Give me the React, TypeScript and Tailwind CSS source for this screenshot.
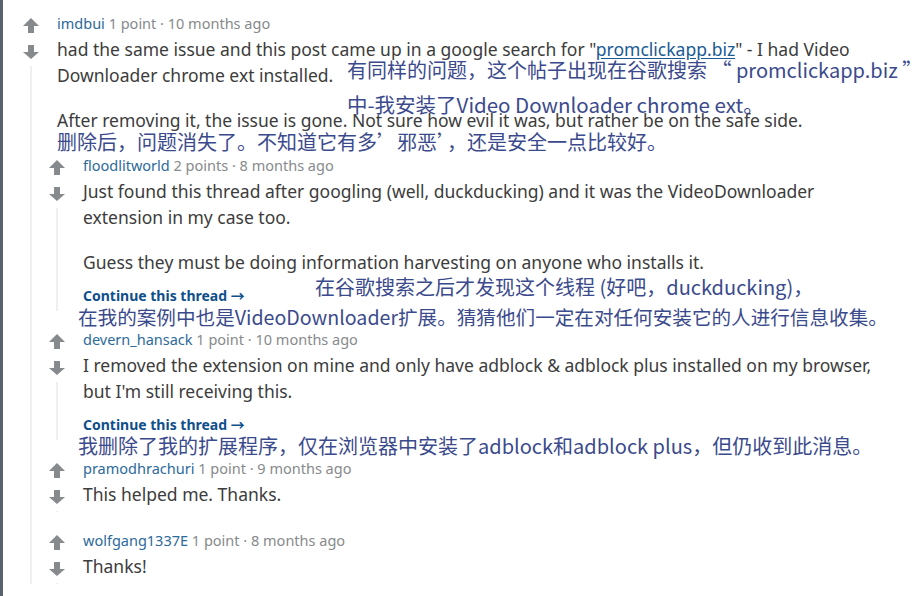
import React from "react";

type CommentData = {
  user: string;
  score: string;
  age: string;
  body: React.ReactNode[];
  more?: boolean;
  replies?: CommentData[];
};

const UpArrow = () => (
  <svg width="16" height="15" viewBox="0 0 16 15" className="block">
    <path d="M8 0 L16 8 H11 V15 H5 V8 H0 Z" fill="#878a8c" />
  </svg>
);

const DownArrow = () => (
  <svg width="16" height="14" viewBox="0 0 16 14" className="block mt-3">
    <path d="M5 0 H11 V7 H16 L8 14 L0 7 H5 Z" fill="#878a8c" />
  </svg>
);

const comments: CommentData[] = [
  {
    user: "imdbui",
    score: "1 point",
    age: "10 months ago",
    body: [
      <>
        had the same issue and this post came up in a google search for "
        <a className="text-[#1a5a94] underline underline-offset-2">promclickapp.biz</a>" - I had Video
        Downloader chrome ext installed.
      </>,
      "After removing it, the issue is gone. Not sure how evil it was, but rather be on the safe side.",
    ],
    replies: [
      {
        user: "floodlitworld",
        score: "2 points",
        age: "8 months ago",
        body: [
          "Just found this thread after googling (well, duckducking) and it was the VideoDownloader extension in my case too.",
          "Guess they must be doing information harvesting on anyone who installs it.",
        ],
        more: true,
      },
      {
        user: "devern_hansack",
        score: "1 point",
        age: "10 months ago",
        body: [
          "I removed the extension on mine and only have adblock & adblock plus installed on my browser, but I'm still receiving this.",
        ],
        more: true,
      },
      {
        user: "pramodhrachuri",
        score: "1 point",
        age: "9 months ago",
        body: ["This helped me. Thanks."],
      },
      {
        user: "wolfgang1337E",
        score: "1 point",
        age: "8 months ago",
        body: ["Thanks!"],
      },
    ],
  },
];

const Comment: React.FC<{ c: CommentData }> = ({ c }) => {
  return (
    <div className="flex">
      <div className="w-[26px] shrink-0 flex flex-col items-center pt-2 pb-[15px]">
        <UpArrow />
        <DownArrow />
        <div className="mt-[7px] flex-1 min-h-px w-[2px] bg-[#edeff1]" />
      </div>
      <div className="flex-1 min-w-0">
        <div className="pl-[13px] pb-[19px]">
          <div className="text-[14.5px] leading-[26px] text-[#878a8c]">
            <span className="text-[#2b6a9b]">{c.user}</span> {c.score} · {c.age}
          </div>
          <div className="text-[17.5px] leading-[26px] text-[#3c3c3c] flex flex-col gap-[19px]">
            {c.body.map((p, i) => (
              <p key={i}>{p}</p>
            ))}
          </div>
          {c.more && (
            <div className="mt-2 h-6 flex items-center text-[14px] font-bold text-[#0f4f8a]">
              Continue this thread →
            </div>
          )}
        </div>
        {c.replies?.map((r) => (
          <Comment key={r.user} c={r} />
        ))}
      </div>
    </div>
  );
};

// translation notes laid over the thread
const notes = [
  { text: "有同样的问题，这个帖子出现在谷歌搜索 “ promclickapp.biz ”", cls: "left-[347px] top-[56px] text-[20px]" },
  { text: "中-我安装了Video Downloader chrome ext。", cls: "left-[347px] top-[90px] text-[20.5px]" },
  { text: "删除后，问题消失了。不知道它有多’邪恶’，还是安全一点比较好。", cls: "left-[57px] top-[128px] text-[20px]" },
  { text: "在谷歌搜索之后才发现这个线程 (好吧，duckducking)，", cls: "left-[315px] top-[273px] text-[20px]" },
  { text: "在我的案例中也是VideoDownloader扩展。猜猜他们一定在对任何安装它的人进行信息收集。", cls: "left-[78px] top-[303px] text-[19.6px]" },
  { text: "我删除了我的扩展程序，仅在浏览器中安装了adblock和adblock plus，但仍收到此消息。", cls: "left-[78px] top-[432px] text-[20px]" },
];

export default function App() {
  return (
    <div
      className="relative flex min-h-screen w-[917px] h-[596px] overflow-hidden bg-white"
      style={{ fontFamily: '"Noto Sans", "Noto Sans CJK SC", sans-serif' }}
    >
      <div className="w-[3px] shrink-0 bg-[#59626c]" />
      <div className="flex-1 pl-[15px] pt-[10px] pr-[37px]">
        {comments.map((c) => (
          <Comment key={c.user} c={c} />
        ))}
      </div>
      {notes.map((n, i) => (
        <div
          key={i}
          className={`absolute ${n.cls} whitespace-nowrap leading-[28px] text-[#3b4a8c]`}
          style={{ fontFamily: '"Noto Sans CJK SC", "Noto Sans", sans-serif' }}
        >
          {n.text}
        </div>
      ))}
    </div>
  );
}
